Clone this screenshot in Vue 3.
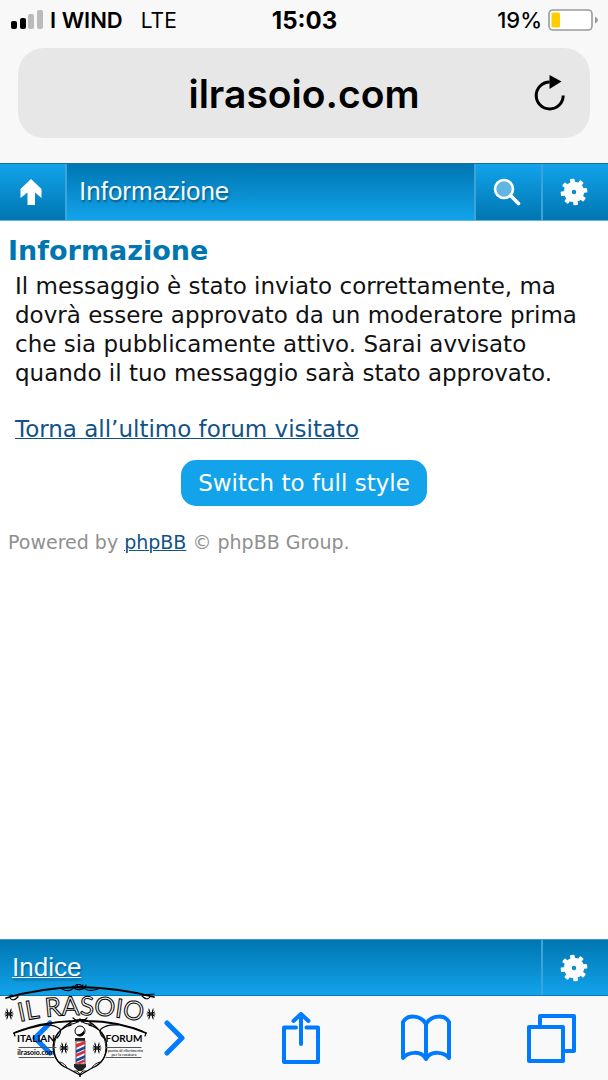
<script setup>
const teeth = [0, 45, 90, 135, 180, 225, 270, 315]
const petals = [-60, -30, 0, 30, 60, 120, 150, 180, 210, 240]
const flowers = [[9, 30], [151, 30], [64, 64], [97, 64]]
</script>

<template>
  <div class="screen">
    <header class="chrome">
      <div class="status">
        <div class="carrier">
          <svg class="signal" width="32" height="20" viewBox="0 0 32 20" aria-hidden="true">
            <rect x="0" y="11" width="6" height="8" rx="2" />
            <rect x="9" y="8" width="6" height="11" rx="2" />
            <rect class="off" x="17" y="4" width="6" height="15" rx="2" />
            <rect class="off" x="26" y="0" width="6" height="19" rx="2" />
          </svg>
          <span class="operator">I WIND</span>
          <span class="network">LTE</span>
        </div>
        <div class="clock">15:03</div>
        <div class="power">
          <span>19%</span>
          <svg width="50" height="22" viewBox="0 0 50 22" aria-hidden="true">
            <rect x="1" y="1" width="43" height="20" rx="4" fill="#fff" stroke="#999" stroke-width="1.6" />
            <rect x="3.5" y="3.5" width="8.5" height="15" rx="1.5" fill="#fc0" />
            <path d="M47 7.500Q50 9 50 11Q50 13 47 14.500Z" fill="#999" />
          </svg>
        </div>
      </div>
      <div class="address">
        <span class="domain">ilrasoio.com</span>
        <button class="reload" type="button" aria-label="Ricarica">
          <svg width="32" height="38" viewBox="0 0 32 38" aria-hidden="true">
            <path d="M29.200 21.500A13.500 13.500 0 1 1 15.700 8" fill="none" stroke="#000" stroke-width="3" />
            <path d="M15.500 1V15L27.500 7.500Z" />
          </svg>
        </button>
      </div>
    </header>

    <nav class="bar top">
      <a class="key first" href="#indice" aria-label="Su">
        <svg width="22" height="28" viewBox="0 0 22 28" aria-hidden="true">
          <path d="M11 1L21.500 11V20L15 14.500V27H7.500V14.500L.5 20V11Z" fill="#fff" />
        </svg>
      </a>
      <span class="title">Informazione</span>
      <a class="key" href="#cerca" aria-label="Cerca">
        <svg width="28" height="28" viewBox="0 0 28 28" aria-hidden="true">
          <circle cx="11" cy="11" r="9" fill="#62b5e0" stroke="#fff" stroke-width="2.600" />
          <path d="M18 18L25.500 25.500" stroke="#fff" stroke-width="3.600" stroke-linecap="round" />
        </svg>
      </a>
      <a class="key" href="#menu" aria-label="Impostazioni">
        <svg width="28" height="28" viewBox="-14 -14 28 28" aria-hidden="true">
          <g transform="rotate(-8)" fill="#fff">
            <rect v-for="t in teeth" :key="t" x="-2.300" y="-13.300" width="4.600" height="6" rx="1" :transform="`rotate(${t})`" />
            <circle r="6.200" fill="none" stroke="#fff" stroke-width="8" />
          </g>
        </svg>
      </a>
    </nav>

    <main>
      <h1>Informazione</h1>
      <div class="message">
        <p>Il messaggio è stato inviato correttamente, ma dovrà essere approvato da un moderatore prima che sia pubblicamente attivo. Sarai avvisato quando il tuo messaggio sarà stato approvato.</p>
        <a href="#forum">Torna all’ultimo forum visitato</a>
      </div>
      <a class="switch" href="#full">Switch to full style</a>
      <p class="powered">Powered by <a href="#phpbb">phpBB</a> © phpBB Group.</p>
    </main>

    <nav class="bar bottom">
      <a class="title" href="#indice">Indice</a>
      <a class="key" href="#menu" aria-label="Impostazioni">
        <svg width="28" height="28" viewBox="-14 -14 28 28" aria-hidden="true">
          <g transform="rotate(-8)" fill="#fff">
            <rect v-for="t in teeth" :key="t" x="-2.300" y="-13.300" width="4.600" height="6" rx="1" :transform="`rotate(${t})`" />
            <circle r="6.200" fill="none" stroke="#fff" stroke-width="8" />
          </g>
        </svg>
      </a>
    </nav>

    <footer class="tools">
      <button class="back" type="button" aria-label="Indietro">
        <svg width="22" height="38" viewBox="0 0 22 38"><path d="M18 4L3 19L18 34" stroke-width="5" stroke-linecap="round" stroke-linejoin="round" /></svg>
      </button>
      <button type="button" aria-label="Avanti">
        <svg width="22" height="38" viewBox="0 0 22 38"><path d="M3 4L18 19L3 34" stroke-width="5" stroke-linecap="round" stroke-linejoin="round" /></svg>
      </button>
      <button type="button" aria-label="Condividi">
        <svg width="38" height="52" viewBox="0 0 38 52">
          <path d="M14 15.500H2V50H36V15.500H24.500M19 32V2M11.500 9L19 2L26.500 9" stroke-width="4" stroke-linecap="round" stroke-linejoin="round" />
        </svg>
      </button>
      <button type="button" aria-label="Segnalibri">
        <svg width="50" height="48" viewBox="0 0 50 48">
          <path d="M25 10C19 0 6 1 2 8V44C7 38 20 36 25 45C30 36 43 38 48 44V8C44 1 31 0 25 10V45" stroke-width="4" stroke-linejoin="round" />
        </svg>
      </button>
      <button type="button" aria-label="Pannelli">
        <svg width="50" height="49" viewBox="0 0 50 49">
          <path d="M2 13H36V47H2ZM13 10V2H47V37H39" stroke-width="4" stroke-linecap="round" stroke-linejoin="round" />
        </svg>
      </button>
      <svg class="logo" width="156" height="96" viewBox="0 0 156 96" role="img" aria-label="Il Rasoio Italian Forum">
        <defs>
          <path id="arch" d="M14 39Q80 23 148 39" />
        </defs>
        <g fill="none" stroke="#000" stroke-linecap="round">
          <path d="M6 14Q40 4 80 3Q120 4 154 13" stroke-width="1.800" />
          <path d="M10 14Q13 18 18 13M10 11L18 12M150 13Q147 17 142 12M154 10L143 11" stroke-width="1.200" />
          <path d="M62 5Q70 9 74 3Q78 -2 82 2Q87 9 98 5M73 2C75 7 84 7 86 1M77 1Q80 7 83 1" stroke-width="1.200" />
          <path d="M14 49Q42 38 73 37Q80 36 87 37Q118 37 146 49" stroke-width="1.800" />
          <path d="M14 49L15 52M16 48L24 45M146 49L145 52M142 47L134 44M42 41Q54 40 60 45Q62 49 57 54M118 41Q107 40 101 45Q98 49 104 54" stroke-width="1.200" />
          <path d="M63 44Q73 35 80 36Q87 34 97 44M68 40Q76 41 80 35Q84 41 92 40M73 34L78 38M87 34L82 38" stroke-width="1.300" />
          <path d="M71 41C49 46 47 76 67 84L80 91L92 84C113 76 111 46 89 41" stroke-width="1.300" />
          <path d="M60 47C52 56 52 74 61 80M100 47C108 56 108 74 99 80M60 78Q66 80 67 84M100 78Q93 80 92 84M74 87Q80 86 80 93Q80 86 86 87" stroke-width="0.900" />
          <path d="M19 63.500H56M19 73.500H54M106 63.500H141M106 73.500H141" stroke="#555" />
          <g v-for="f in flowers" :key="f.join()" :transform="`translate(${f[0]} ${f[1]})`" stroke-width="0.900">
            <path v-for="p in petals" :key="p" d="M1 0H4" :transform="`rotate(${p})`" />
            <path d="M-2 -5Q0 0 -2 5M2 -5Q0 0 2 5" />
          </g>
        </g>
        <text class="name"><textPath href="#arch" startOffset="50%" text-anchor="middle">IL RASOIO</textPath></text>
        <text class="word" x="36" y="58" text-anchor="middle">ITALIAN</text>
        <text class="word" x="124" y="58" text-anchor="middle">FORUM</text>
        <text class="site" x="36" y="71" text-anchor="middle">ilrasoio.com</text>
        <text class="motto" x="124" y="68" text-anchor="middle">il punto di riferimento</text>
        <text class="motto" x="124" y="72" text-anchor="middle">per la rasatura</text>
        <circle cx="80" cy="47" r="5" fill="#fff" stroke="#000" />
        <path d="M76 50Q82 51 84 46Q85 53 79 52Z" />
        <path d="M75 54H85V57H75ZM74 80H86V83L82 87H78L74 83Z" fill="#222" />
        <rect x="76" y="57" width="9" height="23" fill="#fff" stroke="#555" />
        <path d="M76 60L85 57V60L76 64ZM76 70L85 66V69L76 73ZM76 79L85 75V78L79 80Z" fill="#d92d3a" />
        <path d="M76 66L85 62V65L76 69ZM76 75L85 71V74L76 78Z" fill="#1746a0" />
      </svg>
    </footer>
  </div>
</template>

<style>
body {
  margin: 0;
  background: #fff;
}
</style>

<style scoped>
.screen {
  display: flex;
  flex-direction: column;
  min-height: 100vh;
  font-family: "DejaVu Sans", Verdana, sans-serif;
  color: #111;
}
svg {
  display: block;
}
.chrome {
  box-sizing: border-box;
  padding-bottom: 25px;
  background: #f8f8f8;
  font-family: Inter, sans-serif;
  color: #000;
}
.status {
  display: grid;
  grid-template-columns: 1fr auto 1fr;
  align-items: center;
  height: 40px;
  padding: 0 10px 0 11px;
  font-size: 22px;
}
.carrier {
  display: flex;
  align-items: center;
}
.signal {
  margin-right: 7px;
}
.signal .off {
  fill: #bbb;
}
.operator {
  margin-right: 18px;
  font-weight: 600;
}
.network {
  font-size: 21px;
}
.clock {
  font-size: 24px;
  font-weight: 700;
}
.power {
  display: flex;
  justify-content: flex-end;
  align-items: center;
  gap: 6px;
  font-weight: 500;
}
.address {
  display: grid;
  grid-template-columns: 56px 1fr 56px;
  align-items: center;
  height: 90px;
  margin: 8px 18px 0;
  border-radius: 26px;
  background: #e7e7e7;
}
.domain {
  grid-column: 2;
  text-align: center;
  font-size: 39px;
  font-weight: 600;
}
button {
  padding: 0;
  border: 0;
  background: none;
}
.bar {
  display: flex;
  box-sizing: border-box;
  height: 58px;
  border-top: 1px solid #1b6d98;
  border-bottom: 1px solid #62b5e0;
  background: linear-gradient(#0076b1, #12a3eb);
}
.bar.bottom {
  height: 57px;
  border-top-color: #4094bd;
  border-bottom-color: #0c78ae;
}
.title {
  flex: 1;
  padding-left: 12px;
  font: 26px/54px "Liberation Sans", Arial, sans-serif;
  color: #f2f9fd;
  text-shadow: 1px 2px 2px #075985;
}
.key {
  display: flex;
  box-sizing: border-box;
  align-items: center;
  justify-content: center;
  width: 67px;
  padding-right: 4px;
  border-left: 2px solid #39a5db;
  background: linear-gradient(#12a3eb, #0076b1);
}
.key.first {
  border-left: 0;
  border-right: 2px solid #39a5db;
}
.bottom .key {
  background: none;
}
.reload {
  justify-self: start;
}
main {
  flex: 1;
  padding: 11px 8px;
}
h1 {
  margin: 0;
  font-size: 27px;
  line-height: 38px;
  color: #0076b1;
}
.message {
  padding: 2px 7px 0;
  font-size: 23px;
  line-height: 29px;
}
.message p {
  margin: 0 0 27px;
}
a {
  color: #105289;
  text-decoration-thickness: 1px;
}
a.title {
  color: #f2f9fd;
}
.switch {
  display: block;
  width: fit-content;
  margin: 16px auto 0;
  padding: 0 17px;
  border-radius: 15px;
  background: #12a3eb;
  font-size: 23px;
  line-height: 46px;
  color: #fff;
  text-decoration: none;
}
.powered {
  margin: 23px 0 0;
  font-size: 19px;
  line-height: 26px;
  color: #8f8f8f;
}
.tools {
  position: relative;
  display: grid;
  grid-template-columns: repeat(5, 50px);
  justify-content: space-between;
  justify-items: center;
  align-items: center;
  height: 84px;
  padding: 0 31px 0 24px;
  background: #f9f9f9;
}
.tools button svg {
  fill: none;
  stroke: #007aff;
}
.tools .back {
  justify-self: start;
  padding-left: 8px;
}
.logo {
  position: absolute;
  left: 0;
  bottom: 0;
}
.name {
  font: 26px Lato, sans-serif;
  fill: #f9f9f9;
  stroke: #000;
}
.word {
  font: bold 10px Lato, sans-serif;
}
.site {
  font: bold 7px Lato, sans-serif;
}
.motto {
  font: 4px Lato, sans-serif;
}
</style>
